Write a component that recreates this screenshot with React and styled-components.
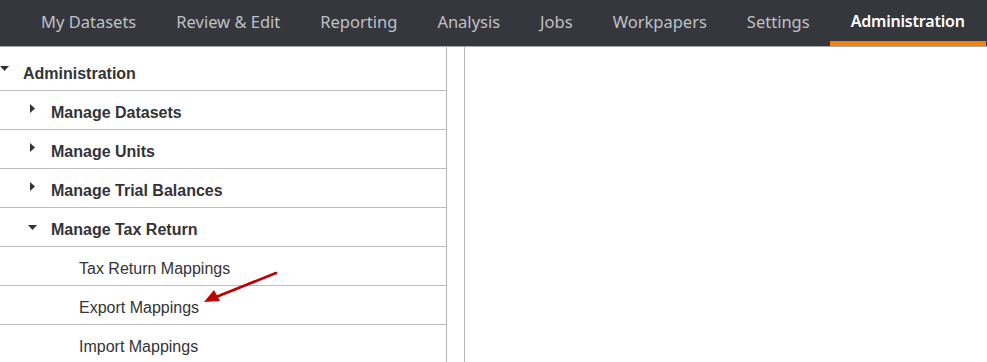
import React from "react";
import styled, { createGlobalStyle } from "styled-components";

const Global = createGlobalStyle`
  html, body { margin: 0; padding: 0; background: #fff; }
  body { font-family: "Liberation Sans", Arial, sans-serif; overflow: hidden; }
  * { box-sizing: border-box; }
`;

const Page = styled.div`
  width: 987px;
  height: 362px;
  display: flex;
  flex-direction: column;
  position: relative;
  overflow: hidden;
`;

const NavBar = styled.nav`
  height: 47px;
  background: #36373c;
  border-bottom: 1px solid #a9a9ad;
  display: flex;
  align-items: stretch;
  padding-left: 21px;
`;

const Tab = styled.div`
  position: relative;
  display: flex;
  align-items: center;
  padding: 0 20px 4px;
  font-family: "Noto Sans", "Open Sans", sans-serif;
  font-size: 16.5px;
  color: #bfc1c6;
  white-space: nowrap;
  ${(p) =>
    p.$active &&
    `
    padding: 0 21px 4px;
    font-size: 16px;
    font-weight: 600;
    letter-spacing: -0.2px;
    color: #ffffff;
    &::after {
      content: "";
      position: absolute;
      left: 0; right: 0; bottom: 0;
      height: 5px;
      background: #f5820b;
    }
  `}
`;

const Body = styled.div`
  flex: 1;
  display: flex;
  min-height: 0;
`;

const TreePanel = styled.div`
  width: 447px;
  border-right: 1px solid #b5b5b8;
  display: flex;
  flex-direction: column;
`;

const Splitter = styled.div`
  width: 18px;
  border-right: 1px solid #b5b5b8;
`;

const Content = styled.div`
  flex: 1;
`;

const Row = styled.div`
  height: ${(p) => (p.$head ? 44 : 39)}px;
  flex-shrink: 0;
  border-bottom: 1px solid #bdbdc0;
  display: flex;
  align-items: center;
  padding-left: ${(p) => p.$level * 28}px;
  font-size: 16px;
  color: #333338;
  font-weight: ${(p) => (p.$leaf ? 400 : 700)};
`;

const Label = styled.span`
  padding-top: ${(p) => (p.$head ? 10 : 5)}px;
  padding-left: ${(p) => (p.$leaf ? 51 : 0)}px;
`;

const Toggle = styled.span`
  width: 9px;
  height: 9px;
  margin-right: 14px;
  margin-bottom: ${(p) => (p.$open ? 0 : 4)}px;
  display: flex;
  align-items: center;
  justify-content: center;
  flex-shrink: 0;
`;

const Caret = ({ open }) => (
  <Toggle $open={open}>
    {open ? (
      <svg width="9" height="5" viewBox="0 0 9 5">
        <path d="M0 0h9L4.5 5z" fill="#333" />
      </svg>
    ) : (
      <svg width="5" height="9" viewBox="0 0 5 9">
        <path d="M0 0l5 4.5L0 9z" fill="#333" />
      </svg>
    )}
  </Toggle>
);

const ArrowOverlay = styled.svg`
  position: absolute;
  left: 200px;
  top: 268px;
  pointer-events: none;
`;

const tabs = [
  "My Datasets",
  "Review & Edit",
  "Reporting",
  "Analysis",
  "Jobs",
  "Workpapers",
  "Settings",
  "Administration",
];

export default function App() {
  return (
    <>
      <Global />
      <Page>
        <NavBar>
          {tabs.map((t) => (
            <Tab key={t} $active={t === "Administration"}>
              {t}
            </Tab>
          ))}
        </NavBar>
        <Body>
          <TreePanel>
            <Row $head $level={0}>
              <Caret open />
              <Label $head>Administration</Label>
            </Row>
            <Row $level={1}>
              <Caret />
              <Label>Manage Datasets</Label>
            </Row>
            <Row $level={1}>
              <Caret />
              <Label>Manage Units</Label>
            </Row>
            <Row $level={1}>
              <Caret />
              <Label>Manage Trial Balances</Label>
            </Row>
            <Row $level={1}>
              <Caret open />
              <Label>Manage Tax Return</Label>
            </Row>
            <Row $level={1} $leaf>
              <Label $leaf>Tax Return Mappings</Label>
            </Row>
            <Row $level={1} $leaf>
              <Label $leaf>Export Mappings</Label>
            </Row>
            <Row $level={1} $leaf>
              <Label $leaf>Import Mappings</Label>
            </Row>
          </TreePanel>
          <Splitter />
          <Content />
        </Body>
        <ArrowOverlay width="80" height="40" viewBox="0 0 80 40">
          <line x1="76" y1="5" x2="16" y2="29" stroke="#c00000" strokeWidth="2.6" strokeLinecap="round" />
          <path d="M4 34 L14 22 L20 33 Z" fill="#c00000" />
        </ArrowOverlay>
      </Page>
    </>
  );
}
